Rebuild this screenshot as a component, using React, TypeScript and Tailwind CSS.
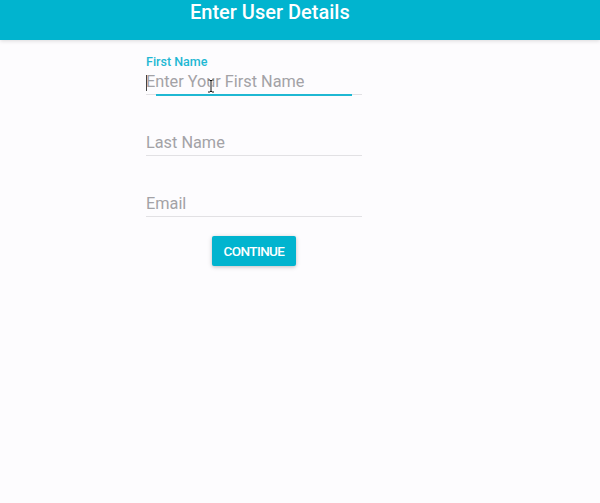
import React from "react";

function Field({ label, hint, focused }: { label: string; hint?: string; focused?: boolean }) {
  return (
    <div className="flex flex-col">
      <div className="h-4 text-[12.5px] font-medium leading-4 text-[#1fb8d3]">{focused ? label : ""}</div>
      <div className="relative h-6 text-[16.3px] leading-6 text-[#a3a2a6]">
        {focused && <span className="absolute left-0 top-[5px] h-4 w-px bg-[#444]" />}
        {focused ? hint : label}
        {focused && (
          <svg className="absolute left-[61px] top-[9px]" width="8" height="14" viewBox="0 0 8 14">
            <path d="M1 1h2l1 1 1-1h2M4 2v10M1 13h2l1-1 1 1h2" fill="none" stroke="#fff" strokeWidth="2.5" />
            <path d="M1 1h2l1 1 1-1h2M4 2v10M1 13h2l1-1 1 1h2" fill="none" stroke="#111" strokeWidth="1" />
          </svg>
        )}
      </div>
      <div className="relative h-px bg-[#e2e1e4]">
        {focused && <div className="absolute left-[10px] right-[10px] top-0 h-[2px] bg-[#1fb8d3]" />}
      </div>
    </div>
  );
}

export default function App() {
  return (
    <div className="min-h-[503px] bg-[#fdfcfe] font-['Roboto',sans-serif]">
      <header className="h-10 bg-[#01b4cf] pl-[190px] shadow-[0_1px_4px_rgba(0,0,0,0.14)]">
        <h1 className="text-[20px] font-medium leading-6 text-white">Enter User Details</h1>
      </header>

      <form className="ml-[146px] mt-[14px] flex w-[216px] flex-col gap-5">
        <Field label="First Name" hint="Enter Your First Name" focused />
        <Field label="Last Name" />
        <Field label="Email" />
        <div className="-mt-px flex justify-center">
          <button
            type="button"
            className="h-[30px] w-[84px] rounded-[2px] bg-[#01b4cf] text-[13.5px] font-medium tracking-[-0.6px] text-white shadow-[0_1px_5px_rgba(0,0,0,0.16),0_1px_3px_rgba(0,0,0,0.1)]"
          >
            CONTINUE
          </button>
        </div>
      </form>
    </div>
  );
}
